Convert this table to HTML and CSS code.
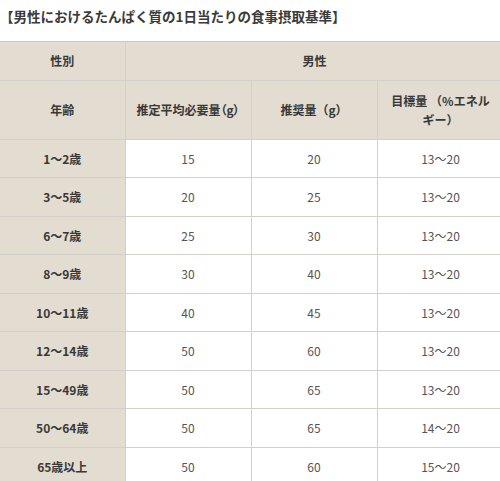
FILE: index.html
```html
<!DOCTYPE html>
<html lang="ja">
<head>
<meta charset="utf-8">
<link rel="stylesheet" href="styles.css">
</head>
<body>
<div class="page">
  <p class="title">【男性におけるたんぱく質の1日当たりの食事摂取基準】</p>
  <div class="table-wrap">
    <table class="intake">
      <colgroup>
        <col class="c1"><col class="c2"><col class="c3"><col class="c4">
      </colgroup>
      <tr class="head1">
        <th>性別</th>
        <th colspan="3">男性</th>
      </tr>
      <tr class="head2">
        <th>年齢</th>
        <th class="tight">推定平均必要量（g）</th>
        <th>推奨量（g）</th>
        <th>目標量 （%エネルギー）</th>
      </tr>
      <tr><th>1～2歳</th><td>15</td><td>20</td><td>13～20</td></tr>
      <tr><th>3～5歳</th><td>20</td><td>25</td><td>13～20</td></tr>
      <tr><th>6～7歳</th><td>25</td><td>30</td><td>13～20</td></tr>
      <tr><th>8～9歳</th><td>30</td><td>40</td><td>13～20</td></tr>
      <tr><th>10～11歳</th><td>40</td><td>45</td><td>13～20</td></tr>
      <tr><th>12～14歳</th><td>50</td><td>60</td><td>13～20</td></tr>
      <tr><th>15～49歳</th><td>50</td><td>65</td><td>13～20</td></tr>
      <tr><th>50～64歳</th><td>50</td><td>65</td><td>14～20</td></tr>
      <tr><th>65歳以上</th><td>50</td><td>60</td><td>15～20</td></tr>
    </table>
  </div>
</div>
</body>
</html>
```
FILE: styles.css
```css
html, body {
  margin: 0;
  padding: 0;
  background: #ffffff;
}
body {
  font-family: "Noto Sans CJK JP", "Noto Sans", sans-serif;
  color: #333333;
}
.page {
  width: 500px;
  overflow: hidden;
}
.title {
  margin: 0;
  padding: 6px 0 0 0;
  font-size: 13.5px;
  line-height: 20px;
  font-weight: bold;
  color: #3a3a3a;
  height: 41px;
  box-sizing: border-box;
}
.table-wrap {
  width: 504px;
}
.intake {
  border-collapse: collapse;
  width: 504px;
  table-layout: fixed;
  font-size: 12px;
}
.c1 { width: 125px; }
.c2 { width: 126px; }
.c3 { width: 126px; }
.c4 { width: 127px; }
.intake th,
.intake td {
  border: 1px solid #d3d0cb;
  padding: 10px 10px;
  line-height: 17.5px;
  text-align: center;
  vertical-align: middle;
}
.intake tr:first-child th {
  border-top: 1px solid #cfc8bd;
}
.intake th {
  background: #e3dcd1;
  font-weight: bold;
  color: #383838;
}
.intake th:first-child {
  border-left: none;
}
.intake th.tight {
  padding-left: 4px;
  padding-right: 4px;
  white-space: nowrap;
  font-feature-settings: "palt";
}
.intake td {
  background: #ffffff;
  color: #555555;
  font-weight: normal;
}
.head1 th {
  height: 17px;
}
.head2 th {
  height: 37.5px;
  line-height: 19px;
}
```
